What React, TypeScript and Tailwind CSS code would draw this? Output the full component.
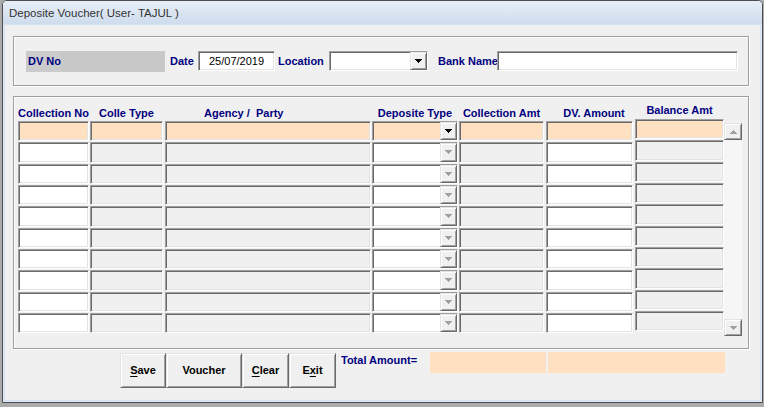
import React from "react";

const sunken =
  "border border-t-[#a0a0a0] border-l-[#a0a0a0] border-b-white border-r-white shadow-[inset_1px_1px_0_#696969,inset_-1px_-1px_0_#e3e3e3]";
const raised =
  "border border-t-[#e3e3e3] border-l-[#e3e3e3] border-b-[#696969] border-r-[#696969] shadow-[inset_1px_1px_0_#ffffff,inset_-1px_-1px_0_#a0a0a0]";
const etched = "border border-[#a0a0a0] shadow-[inset_1px_1px_0_#ffffff,1px_1px_0_#ffffff]";
const label = "text-[11px] font-bold text-[#000080] whitespace-nowrap";

function Tri({ up = false, color }: { up?: boolean; color: string }) {
  const rows = up
    ? [
        [3, 0, 1],
        [2, 1, 3],
        [1, 2, 5],
        [0, 3, 7],
      ]
    : [
        [0, 0, 7],
        [1, 1, 5],
        [2, 2, 3],
        [3, 3, 1],
      ];
  return (
    <svg width="7" height="4" viewBox="0 0 7 4" shapeRendering="crispEdges">
      {rows.map(([x, y, w], i) => (
        <rect key={i} x={x} y={y} width={w} height={1} fill={color} />
      ))}
    </svg>
  );
}

function DropBtn({ active }: { active: boolean }) {
  return (
    <div className={`${raised} w-[17px] h-full bg-[#f0f0f0] flex items-center justify-center`}>
      <Tri color={active ? "#000000" : "#a0a0a0"} />
    </div>
  );
}

function Row({ first }: { first: boolean }) {
  const peach = "bg-[#ffe0c0]";
  return (
    <div className="flex h-[20.33px]">
      <div className={`${sunken} w-[71px] ${first ? peach : "bg-white"}`} />
      <div className={`${sunken} w-[73px] ml-[1px] ${first ? peach : "bg-[#f0f0f0]"}`} />
      <div className={`${sunken} w-[206px] ml-[2px] ${first ? peach : "bg-[#f0f0f0]"}`} />
      <div className={`${sunken} w-[86px] ml-[1px] flex justify-end ${first ? peach : "bg-white"}`}>
        <DropBtn active={first} />
      </div>
      <div className={`${sunken} w-[85px] ml-[1px] ${first ? peach : "bg-[#f0f0f0]"}`} />
      <div className={`${sunken} w-[87px] ml-[2px] ${first ? peach : "bg-white"}`} />
      <div className={`${sunken} w-[89px] ml-[2px] -mt-[2px] mb-[2px] ${first ? peach : "bg-[#f0f0f0]"}`} />
    </div>
  );
}

function Btn({ children, w }: { children: React.ReactNode; w: string }) {
  return (
    <div
      className={`${raised} ${w} h-[35px] bg-[#f0f0f0] flex items-center justify-center text-[11px] font-bold text-black`}
    >
      {children}
    </div>
  );
}

export default function App() {
  const rows = [0, 1, 2, 3, 4, 5, 6, 7, 8, 9];
  return (
    <div className="w-[764px] h-[407px] bg-[#ababab] font-['Liberation_Sans',Arial,sans-serif] overflow-hidden">
      <div className="ml-[2px] w-[761px] h-[403px] border border-[#4d4d4d] rounded-t-[5px] bg-[#e1eaf5] flex flex-col overflow-hidden">
        <div className="h-[23px] bg-linear-to-b from-[#e8eef6] to-[#cedced] flex items-center pl-[6px] pt-[3px] text-[11.5px] text-[#333333]">
          Deposite Voucher( User- TAJUL )
        </div>
        <div className="flex-1 mx-[1px] mb-[1px] border border-[#d3e2f2] bg-[#f0f0f0] pt-[11px] pl-[8px] flex flex-col">
          {/* Group 1 */}
          <div className={`${etched} w-[736px] h-[50px] pt-[14px] pl-[12px] flex items-start`}>
            <div className={`w-[35px] h-[21px] bg-[#cbcbcb] pl-[2px] leading-[21px] ${label}`}>DV No</div>
            <div className="w-[104px] h-[21px] bg-[#c8c8c8]" />
            <div className={`ml-[5px] w-[28px] leading-[21px] ${label}`}>Date</div>
            <div className={`${sunken} w-[77px] h-[20px] bg-white pl-[10px] text-[11px] leading-[18px] text-black`}>
              25/07/2019
            </div>
            <div className={`ml-[3px] w-[51px] leading-[21px] ${label}`}>Location</div>
            <div className={`${sunken} w-[99px] h-[20px] bg-white flex justify-end`}>
              <DropBtn active={true} />
            </div>
            <div className={`ml-[10px] w-[59px] leading-[21px] ${label}`}>Bank Name</div>
            <div className={`${sunken} w-[241px] h-[20px] bg-white`} />
          </div>

          {/* Group 2 */}
          <div className={`${etched} w-[736px] h-[253px] mt-[10px] pl-[4px] flex flex-col`}>
            <div className="h-[24px] flex items-start leading-[13px]">
              <div className={`w-[71px] pt-[10px] text-center ${label}`}>Collection No</div>
              <div className={`w-[73px] ml-[1px] pt-[10px] text-center ${label}`}>Colle Type</div>
              <div className={`w-[206px] ml-[2px] pt-[10px] pl-[39px] ${label}`}>Agency /&nbsp; Party</div>
              <div className={`w-[86px] ml-[1px] pt-[10px] text-center ${label}`}>Deposite Type</div>
              <div className={`w-[85px] ml-[1px] pt-[10px] text-center ${label}`}>Collection Amt</div>
              <div className={`w-[87px] ml-[2px] pt-[10px] pl-[9px] text-center ${label}`}>DV. Amount</div>
              <div className={`w-[89px] ml-[2px] pt-[7px] text-center ${label}`}>Balance Amt</div>
            </div>
            <div className="flex items-start">
              <div className="w-[706px] flex flex-col gap-[1px]">
                {rows.map((r) => (
                  <Row key={r} first={r === 0} />
                ))}
              </div>
              <div className="w-[18px] h-[213px] mt-[2px] flex flex-col">
                <div className={`${raised} h-[17px] bg-[#f0f0f0] flex items-center justify-center`}>
                  <Tri up color="#a0a0a0" />
                </div>
                <div className="flex-1 bg-[#f6f6f6]" />
                <div className={`${raised} h-[17px] bg-[#f0f0f0] flex items-center justify-center`}>
                  <Tri color="#a0a0a0" />
                </div>
              </div>
            </div>
          </div>

          {/* Bottom row */}
          <div className="mt-[3px] ml-[107px] flex items-start">
            <div className="mt-[1px] flex">
              <Btn w="w-[46px]">
                <span>
                  <span className="underline underline-offset-[2px]">S</span>ave
                </span>
              </Btn>
              <Btn w="w-[76px]">Voucher</Btn>
              <Btn w="w-[47px]">
                <span>
                  <span className="underline underline-offset-[2px]">C</span>lear
                </span>
              </Btn>
              <Btn w="w-[47px]">
                <span>
                  E<span className="underline underline-offset-[2px]">x</span>it
                </span>
              </Btn>
            </div>
            <div className={`ml-[5px] mt-[2px] w-[89px] leading-[13px] ${label}`}>Total Amount=</div>
            <div className="w-[116px] h-[21px] bg-[#ffe0c0]" />
            <div className="ml-[2px] w-[177px] h-[21px] bg-[#ffe0c0]" />
          </div>
        </div>
      </div>
    </div>
  );
}
